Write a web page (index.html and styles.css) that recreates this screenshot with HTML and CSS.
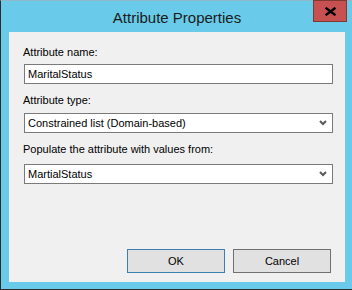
FILE: index.html
```html
<!DOCTYPE html>
<html>
<head>
<meta charset="utf-8">
<link rel="stylesheet" href="styles.css">
</head>
<body>
<div class="window">
  <div class="titlebar">
    <span class="title">Attribute Properties</span>
    <button class="close" type="button" aria-label="Close">
      <svg width="11" height="9" viewBox="0 0 11 9"><path d="M1.5 1.5 L9.5 7.5 M9.5 1.5 L1.5 7.5" stroke="#000" stroke-width="2.4" stroke-linecap="square" fill="none"/></svg>
    </button>
  </div>
  <div class="content">
    <div class="field f1">
      <label class="lbl">Attribute name:</label>
      <div class="box">MaritalStatus</div>
    </div>
    <div class="field f2">
      <label class="lbl">Attribute type:</label>
      <div class="box select"><span>Constrained list (Domain-based)</span>
        <svg class="chev" width="8" height="6" viewBox="0 0 8 6"><path d="M1 1 L4 4 L7 1" stroke="#5a5a5a" stroke-width="2" fill="none"/></svg>
      </div>
    </div>
    <div class="field f3">
      <label class="lbl">Populate the attribute with values from:</label>
      <div class="box select"><span>MartialStatus</span>
        <svg class="chev" width="8" height="6" viewBox="0 0 8 6"><path d="M1 1 L4 4 L7 1" stroke="#5a5a5a" stroke-width="2" fill="none"/></svg>
      </div>
    </div>
    <div class="buttons">
      <button class="btn default" type="button">OK</button>
      <button class="btn" type="button">Cancel</button>
    </div>
  </div>
</div>
</body>
</html>
```
FILE: styles.css
```css
html, body {
  margin: 0;
  padding: 0;
  background: #ffffff;
}
.window {
  position: relative;
  width: 352px;
  height: 290px;
  box-sizing: border-box;
  border-left: 1px solid #2b2b2b;
  border-bottom: 1px solid #2b2b2b;
  border-top: 1px solid #8fb9c8;
  background: #69cbe9;
  padding: 0 7px 7px 8px;
  display: flex;
  flex-direction: column;
  font-family: "Liberation Sans", Arial, sans-serif;
}
.titlebar {
  height: 31px;
  display: flex;
  align-items: center;
  justify-content: center;
}
.title {
  font-size: 15px;
  color: #1b1b1b;
  margin-top: 1px;
}
.close {
  position: absolute;
  left: 312px;
  top: -1px;
  width: 34px;
  height: 22px;
  box-sizing: border-box;
  border: 1px solid #7d3a33;
  background: #c75050;
  padding: 0;
  display: flex;
  align-items: center;
  justify-content: center;
}
.content {
  flex: 1;
  background: #f0f0f0;
  padding: 13px 12px 0 15px;
  display: flex;
  flex-direction: column;
  font-size: 11px;
  color: #000;
}
.field {
  display: flex;
  flex-direction: column;
  gap: 4px;
  margin-bottom: 9px;
}
.f2 { gap: 5px; }
.f3 { gap: 7px; }
.lbl {
  line-height: 15px;
  height: 15px;
  margin-left: -1px;
}
.box {
  height: 20px;
  box-sizing: border-box;
  border: 1px solid #7a7a7a;
  background: #fff;
  line-height: 18px;
  padding: 0 3px;
  display: flex;
  align-items: center;
  justify-content: space-between;
}
.chev {
  margin-right: 2px;
}
.buttons {
  margin-top: auto;
  margin-bottom: 9px;
  display: flex;
  justify-content: flex-end;
  gap: 8px;
  padding-right: 2px;
}
.btn {
  width: 98px;
  height: 24px;
  box-sizing: border-box;
  border: 1px solid #707070;
  background: #e1e1e1;
  font-family: "Liberation Sans", Arial, sans-serif;
  font-size: 11px;
  color: #000;
  padding: 0;
}
.btn.default {
  border-color: #3c7fb1;
}
```
